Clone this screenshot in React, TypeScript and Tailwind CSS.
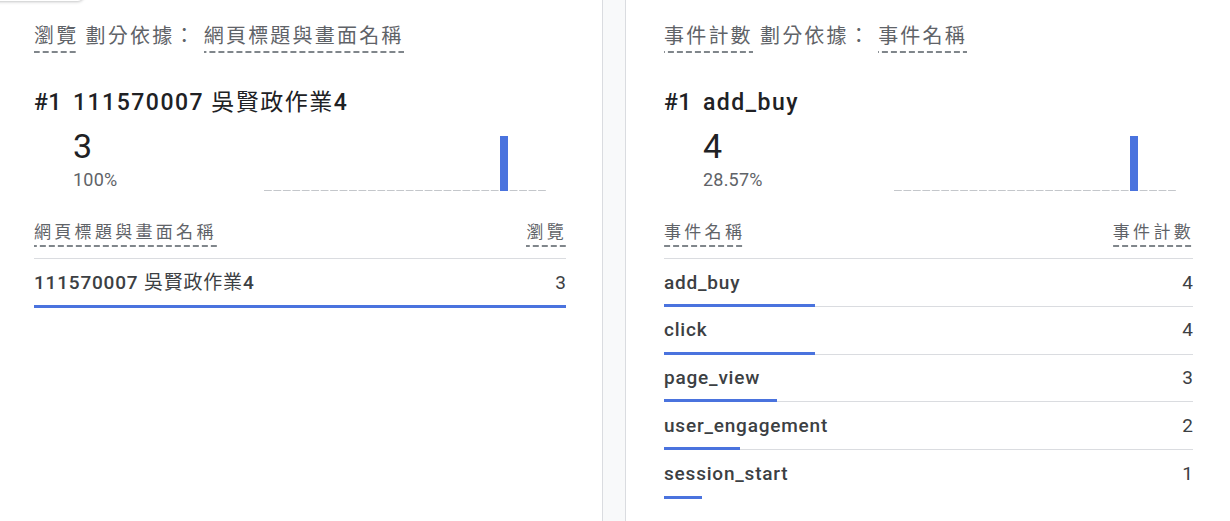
const BLUE = "#4a73de"

const dash =
  "inline-block pb-[5px] bg-[linear-gradient(to_right,#80868b_62%,transparent_62%)] bg-[length:9px_2px] bg-bottom bg-repeat-x"

type Row = { name: string; value: number }

const pageRows: Row[] = [{ name: "111570007 吳賢政作業4", value: 3 }]

const eventRows: Row[] = [
  { name: "add_buy", value: 4 },
  { name: "click", value: 4 },
  { name: "page_view", value: 3 },
  { name: "user_engagement", value: 2 },
  { name: "session_start", value: 1 },
]

// CJK glyphs render at regular weight in the source, latin parts medium
function Label({ text }: { text: string }) {
  const parts = text.split(/([\u3400-\u9fff]+)/).filter(Boolean)
  return (
    <>
      {parts.map((p, i) =>
        /[\u3400-\u9fff]/.test(p) ? (
          <span key={i} className="font-normal">
            {p}
          </span>
        ) : (
          <span key={i}>{p}</span>
        )
      )}
    </>
  )
}

function Sparkline() {
  const segs = Array.from({ length: 30 }, (_, i) => i)
  return (
    <svg width="284" height="56" viewBox="0 0 284 56" className="mt-[9px] shrink-0">
      {segs.map((i) => (
        <line key={i} x1={i * 9.45} x2={i * 9.45 + 7.8} y1="55.5" y2="55.5" stroke="#c4c7cb" strokeWidth="1" />
      ))}
      <rect x="236" y="1" width="8" height="55" fill={BLUE} />
    </svg>
  )
}

interface CardProps {
  metric: string
  dimension: string
  topName: string
  topValue: string
  percent: string
  rows: Row[]
  className?: string
}

function Card({ metric, dimension, topName, topValue, percent, rows, className }: CardProps) {
  const total = rows.reduce((s, r) => s + r.value, 0)
  return (
    <div className={`flex flex-col ${className}`}>
      {/* heading */}
      <div className="pt-[24px] text-[20px] leading-[24px] tracking-[2.2px] text-[#5f6368]">
        <span className={dash}>{metric}</span>
        <span> 劃分依據： </span>
        <span className={dash}>{dimension}</span>
      </div>

      {/* top item */}
      <div className="mt-[36px] flex items-baseline text-[23px] leading-[28px] font-medium text-[#202124]">
        <span className="tracking-[0.5px]">#1</span>
        <span className="ml-[11px] tracking-[1.5px]">
          <Label text={topName} />
        </span>
      </div>

      <div className="mt-[9px] flex">
        <div className="ml-[39px] w-[191px] flex flex-col">
          <div className="text-[34px] leading-[40px] text-[#202124]">{topValue}</div>
          <div className="mt-[2px] text-[18px] leading-[24px] tracking-[0.2px] text-[#5f6368]">{percent}</div>
        </div>
        <Sparkline />
      </div>

      {/* table */}
      <div className="mt-[30px] flex justify-between border-b border-[#dadce0] pb-[11px] text-[17px] leading-[20px] tracking-[3.3px] text-[#5f6368]">
        <span className={dash}>{dimension}</span>
        <span className={`${dash} -mr-[1px]`}>{metric}</span>
      </div>
      {rows.map((r) => (
        <div
          key={r.name}
          className="relative flex h-[47.75px] items-center justify-between border-b border-[#dadce0] pt-[1px] text-[19px] text-[#3c4043] last:border-b-0"
        >
          <span className="font-medium tracking-[0.8px]">
            <Label text={r.name} />
          </span>
          <span>{r.value}</span>
          <div
            className="absolute left-0 bottom-[-1px] h-[3px]"
            style={{ width: `${(r.value / total) * 100}%`, backgroundColor: BLUE }}
          />
        </div>
      ))}
    </div>
  )
}

export default function App() {
  return (
    <div className="relative flex h-[521px] w-[1230px] overflow-hidden bg-white font-['Roboto','Noto_Sans_CJK_TC',sans-serif]">
      {/* edge of a card above */}
      <div className="absolute left-[-12px] top-[-12px] h-[13px] w-[96px] rounded-[8px] bg-white shadow-[0_1px_3px_rgba(60,64,67,0.3)]" />

      <Card
        className="w-[603px] shrink-0 border-r border-[#dadce0] pl-[34px] pr-[36px]"
        metric="瀏覽"
        dimension="網頁標題與畫面名稱"
        topName="111570007 吳賢政作業4"
        topValue="3"
        percent="100%"
        rows={pageRows}
      />
      <div className="w-[23px] shrink-0 border-r border-[#dadce0] bg-[#f8f9fa]" />
      <Card
        className="flex-1 pl-[38px] pr-[37px]"
        metric="事件計數"
        dimension="事件名稱"
        topName="add_buy"
        topValue="4"
        percent="28.57%"
        rows={eventRows}
      />
    </div>
  )
}
